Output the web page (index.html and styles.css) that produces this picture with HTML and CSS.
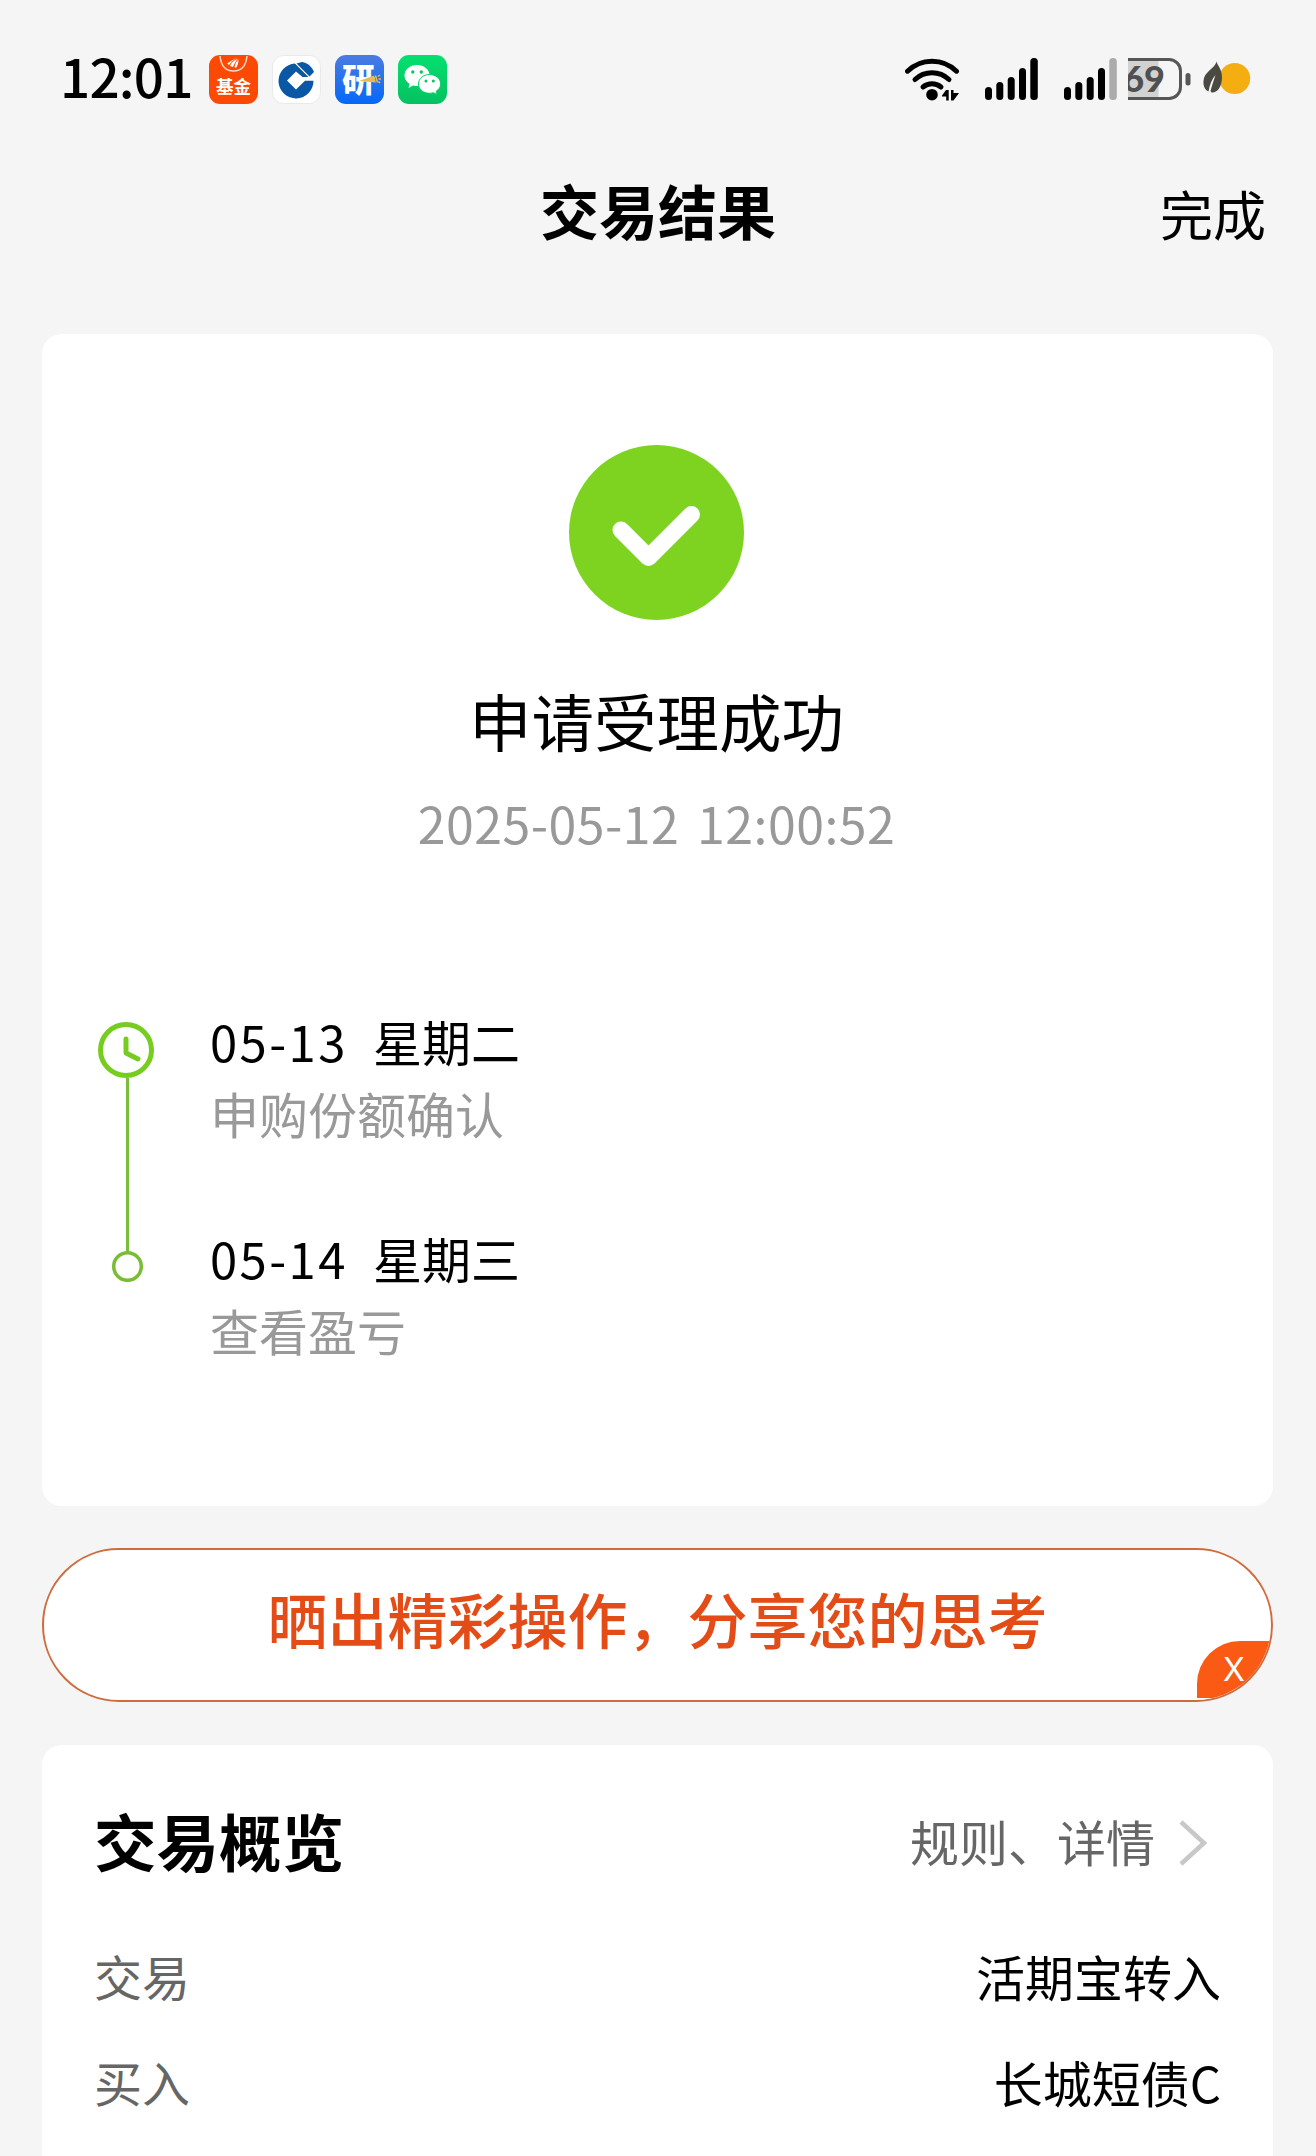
FILE: index.html
```html
<!DOCTYPE html>
<html lang="zh-CN">
<head>
  <meta charset="UTF-8" />
  <title>交易结果</title>
  <link rel="stylesheet" href="styles.css">
</head>
<body>
  <div class="status-bar">
    <div class="time">12:01</div>
    <div class="apps">
      <svg class="app" viewBox="0 0 49 49">
        <rect width="49" height="49" rx="11" fill="#fc4a05"/>
        <path d="M11 1C12 11 17 16 24.500 16S37 11 38 1" fill="none" stroke="#ffd9c8" stroke-width="1.500"/>
        <path d="M18 8.500L28 2.500C25 5 22 7 20 10ZM21 11C22 8 25 5 29 3.500C27 6 25 9 24 12ZM25.500 12C26 9 27 7 29.500 4.500C29.500 8 28.500 11 27 13Z" fill="#fff"/>
        <text x="24.500" y="38" font-size="17.500" font-weight="700" text-anchor="middle" fill="#fff">基金</text>
      </svg>
      <svg class="app" viewBox="0 0 49 49">
        <rect x=".5" y=".5" width="48" height="48" rx="11" fill="#fff" stroke="#e9e9ec"/>
        <path d="M23 8.500A17.500 17.500 0 1 0 41.500 25.700H33L24 34.500L15 25.500L24 16.500L30.500 22L36.500 22Z" fill="#0a57a6"/>
        <path d="M24.500 8.500L30 7C36 8 40 12 42 17L37.500 21.500Z" fill="#0a57a6"/>
        <path d="M23 8L37.500 22.500" stroke="#fff" stroke-width="1"/>
      </svg>
      <svg class="app" viewBox="0 0 49 49">
        <defs>
          <linearGradient id="blue" x1="0" y1="0" x2="0" y2="1">
            <stop offset="0" stop-color="#4b7be2"/>
            <stop offset="1" stop-color="#0468f8"/>
          </linearGradient>
        </defs>
        <rect width="49" height="49" rx="11" fill="url(#blue)"/>
        <text x="23.500" y="36.500" font-size="33" font-weight="900" text-anchor="middle" fill="#fff">研</text>
        <path d="M24 26L39 20.500L41 27.500Z" fill="#e6bd4c"/>
        <path d="M40.500 20.500L42.500 27.500M43 21.500L45 20M43.500 24H46M43.500 26.500L45 28" stroke="#e6bd4c" stroke-width="1.500"/>
      </svg>
      <svg class="app" viewBox="0 0 49 49">
        <defs>
          <linearGradient id="green" x1="0" y1="0" x2="0" y2="1">
            <stop offset="0" stop-color="#05e070"/>
            <stop offset="1" stop-color="#05c160"/>
          </linearGradient>
        </defs>
        <rect width="49" height="49" rx="11" fill="url(#green)"/>
        <path d="M19 10C12 10 6.500 14.500 6.500 20.500C6.500 24 8.500 27 11.500 29L10.500 33L15 30.500C16.500 31 18 31 20 31C26 31 31.500 26.500 31.500 20.500S26 10 19 10Z" fill="#fff"/>
        <path d="M31.500 19.500C25.500 19.500 20.500 23.500 20.500 29S25.500 38.300 31.500 38.300C33 38.300 34.500 38 35.500 37.700L39 39.500L38.300 36C41 34.500 42.700 32 42.700 29C42.700 23.500 37.500 19.500 31.500 19.500Z" fill="#fff" stroke="#05d068" stroke-width="1"/>
        <g fill="#05c865">
          <circle cx="14.800" cy="17" r="1.700"/>
          <circle cx="23.300" cy="17" r="1.700"/>
          <circle cx="28" cy="26" r="1.500"/>
          <circle cx="35.300" cy="26" r="1.500"/>
        </g>
      </svg>
    </div>
    <div class="system">
      <svg class="wifi" viewBox="0 0 55 43">
        <g fill="none" stroke="#000" stroke-width="5" stroke-linecap="round">
          <path d="M2.500 13.200A35 35 0 0 1 51.500 13.200"/>
          <path d="M10 21.500A25 25 0 0 1 44 21.500"/>
          <path d="M18 29A14.500 14.500 0 0 1 36 29"/>
        </g>
        <circle cx="27" cy="36.700" r="5.800"/>
        <path d="M37 37.500L41 32H43.700V42.500H41.200V38.500H37ZM46 32H48.500V35H54L48.500 42.500H46Z"/>
      </svg>
      <svg class="signal" viewBox="0 0 54 43">
        <rect x="0" y="29" width="7" height="13" rx="3.500"/>
        <rect x="11.300" y="24" width="7" height="18" rx="3.500"/>
        <rect x="22.700" y="19" width="7" height="23" rx="3.500"/>
        <rect x="34" y="10" width="7" height="32" rx="3.500"/>
        <rect x="45.300" y="0" width="7.500" height="42" rx="3.500"/>
      </svg>
      <svg class="signal" viewBox="0 0 54 43">
        <rect x="0" y="29" width="7" height="13" rx="3.500"/>
        <rect x="11.300" y="24" width="7" height="18" rx="3.500"/>
        <rect x="22.700" y="19" width="7" height="23" rx="3.500"/>
        <rect x="34" y="10" width="7" height="32" rx="3.500"/>
        <rect x="45.300" y="0" width="7.500" height="42" rx="3.500" fill="#ababab"/>
      </svg>
      <svg class="battery" viewBox="0 0 63 43">
        <rect x="0" y="2" width="30.500" height="38" fill="#d2d2d2"/>
        <path d="M0 1.500H41A11.500 11.500 0 0 1 52.500 13V29A11.500 11.500 0 0 1 41 40.500H0" fill="none" stroke="#565656" stroke-width="3"/>
        <rect x="57.500" y="15" width="5" height="12.500" rx="2.500" fill="#565656"/>
        <text class="level" x="16" y="34" font-size="36" text-anchor="middle" fill="#505050">69</text>
      </svg>
      <svg class="leaf" viewBox="0 0 49 43">
        <circle cx="31.700" cy="20.500" r="15.500" fill="#f5ae12"/>
        <path d="M13.500 3.500C14 7 19 11 19 19C19 28 15 35 8.500 34.500L7.500 33C9 27 11 22 12.500 17C9 21 6.500 27 5.500 33.500C2 32 0 28 .5 23C1 13 12 11 13.500 3.500Z" fill="#4a4a42"/>
      </svg>
    </div>
  </div>

  <div class="header">
    <h1>交易结果</h1>
    <a class="done">完成</a>
  </div>

  <div class="card result">
    <svg class="check" viewBox="0 0 175 175">
      <circle cx="87.500" cy="87.500" r="87.500" fill="#7ed321"/>
      <path d="M52 85L79.500 112.500L122.500 69.500" fill="none" stroke="#fff" stroke-width="17" stroke-linecap="round" stroke-linejoin="round"/>
    </svg>
    <h2>申请受理成功</h2>
    <p class="date">2025-05-12 12:00:52</p>
    <div class="timeline">
      <svg class="rail" viewBox="0 0 58 260">
        <path d="M29.500 56V229" stroke="#78be3c" stroke-width="3"/>
        <circle cx="28" cy="28" r="25.500" fill="#fff" stroke="#76cd20" stroke-width="5"/>
        <path d="M28 17V31L40 37" fill="none" stroke="#76cd20" stroke-width="5" stroke-linecap="round" stroke-linejoin="round"/>
        <circle cx="29.500" cy="244.500" r="13.800" fill="#fff" stroke="#78bd35" stroke-width="3.500"/>
      </svg>
      <div class="steps">
        <div class="step">
          <p class="day"><span>05-13</span>星期二</p>
          <p class="desc">申购份额确认</p>
        </div>
        <div class="step">
          <p class="day"><span>05-14</span>星期三</p>
          <p class="desc">查看盈亏</p>
        </div>
      </div>
    </div>
  </div>

  <div class="share">
    晒出精彩操作，分享您的思考
    <div class="close">X</div>
  </div>

  <div class="card overview">
    <div class="overview-head">
      <h2>交易概览</h2>
      <a class="rules">规则、详情
        <svg class="chevron" viewBox="0 0 31 48">
          <path d="M4 3L27 24L4 45" fill="none" stroke="#c8c8c8" stroke-width="4.500"/>
        </svg>
      </a>
    </div>
    <div class="row"><span>交易</span><b>活期宝转入</b></div>
    <div class="row"><span>买入</span><b>长城短债C</b></div>
  </div>
</body>
</html>
```
FILE: styles.css
```css
* {
  box-sizing: border-box;
}
body {
  font-family: 'Noto Sans CJK SC', sans-serif;
  background-color: #f5f5f5;
  color: #000;
  margin: 0;
  height: 2156px;
  overflow: hidden;
}
h1, h2, p {
  margin: 0;
}
svg {
  display: block;
  flex: none;
}
.status-bar {
  display: flex;
  align-items: center;
  height: 158px;
  padding: 0 64px 0 60px;
}
.time {
  width: 149px;
  font-size: 53px;
  font-weight: 500;
  line-height: 60px;
  letter-spacing: -0.8px;
  padding-bottom: 8px;
}
.apps {
  display: flex;
  gap: 14px;
}
.app {
  width: 49px;
  height: 49px;
}
.system {
  display: flex;
  margin-left: auto;
}
.wifi {
  width: 55px;
  height: 43px;
  margin-right: 25px;
}
.signal {
  width: 54px;
  height: 43px;
  margin-right: 25px;
}
.signal + .battery {
  margin-left: -15px;
}
.battery {
  width: 63px;
  height: 43px;
  margin-right: 12px;
}
.level {
  font-family: Lato, sans-serif;
  font-weight: 900;
}
.leaf {
  width: 49px;
  height: 43px;
}
.header {
  display: grid;
  grid-template-columns: 1fr auto 1fr;
  align-items: center;
  height: 102px;
  padding: 2px 50px 0;
}
.header h1 {
  grid-column: 2;
  font-size: 59px;
  line-height: 90px;
}
.done {
  justify-self: end;
  font-size: 53px;
  line-height: 60px;
  padding-top: 6px;
}
.card {
  background-color: #fff;
  border-radius: 20px;
  margin: 0 43px 0 42px;
}
.result {
  height: 1172px;
  margin-top: 74px;
  padding: 111px 58px 0 56px;
  text-align: center;
}
.check {
  width: 175px;
  height: 175px;
  margin: 0 auto;
}
.result h2 {
  font-size: 62.5px;
  font-weight: 400;
  line-height: 80px;
  margin-top: 60px;
}
.date {
  font-size: 50px;
  line-height: 60px;
  letter-spacing: 0.5px;
  word-spacing: 6px;
  color: #999;
  margin-top: 32px;
}
.timeline {
  display: flex;
  gap: 54px;
  margin-top: 153px;
  text-align: left;
}
.rail {
  width: 58px;
  height: 260px;
  margin-top: 17px;
}
.steps {
  display: flex;
  flex-direction: column;
  gap: 73px;
}
.day, .desc {
  font-size: 49px;
  line-height: 72px;
}
.day {
  display: flex;
}
.day span {
  width: 163px;
  letter-spacing: 2.4px;
}
.desc {
  color: #999;
}
.share {
  position: relative;
  overflow: hidden;
  height: 154px;
  margin: 42px 43px 0 42px;
  padding-bottom: 16px;
  display: flex;
  align-items: center;
  justify-content: center;
  background-color: #fff;
  border: 2px solid #cf6c3e;
  border-radius: 77px;
  color: #e34c16;
  font-size: 60px;
  font-weight: 500;
}
/* close tab sits over the pill's lower right end */
.close {
  position: absolute;
  right: 0;
  bottom: 2px;
  width: 74px;
  height: 57px;
  background-color: #fb5a14;
  border-top-left-radius: 43px;
  color: #fff;
  font-family: Inter, sans-serif;
  font-size: 32px;
  font-weight: 400;
  line-height: 57px;
  text-align: center;
}
.overview {
  height: 500px;
  margin-top: 43px;
  padding: 44px 52px 0 52px;
}
.overview-head {
  display: flex;
  align-items: center;
  justify-content: space-between;
  height: 100px;
  margin-bottom: 33px;
}
.overview h2 {
  font-size: 62.5px;
  line-height: 90px;
  padding-top: 2px;
}
.rules {
  display: flex;
  align-items: center;
  gap: 22px;
  margin-right: 13px;
  padding-top: 3px;
  color: #666;
  font-size: 49px;
  line-height: 72px;
}
.chevron {
  width: 31px;
  height: 48px;
  margin-top: 5px;
}
.row {
  display: flex;
  align-items: center;
  justify-content: space-between;
  height: 106px;
  font-size: 49px;
}
.row span {
  color: #666;
  font-size: 48px;
}
.row b {
  font-weight: 400;
}
```
